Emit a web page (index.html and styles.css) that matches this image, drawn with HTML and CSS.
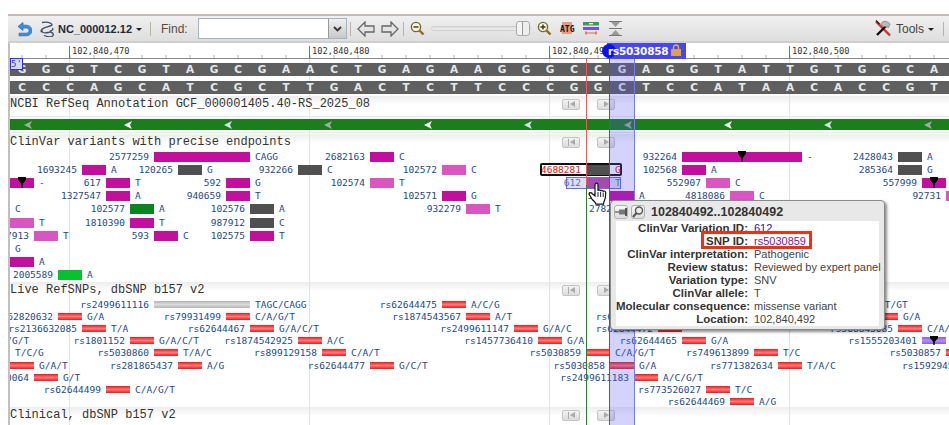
FILE: index.html
```html
<!DOCTYPE html>
<html lang="en">
<head>
  <meta charset="UTF-8" />
  <title>Sequence Viewer</title>
  <link rel="stylesheet" href="styles.css">
</head>
<body>
  <div class="viewer">
    <div class="toolbar">
      <svg class="tool tool-back" width="16" height="16" viewBox="0 0 16 16"><path d="M7 1.5 2 5.5l5 4V7h3.5a2.6 2.6 0 0 1 0 5.2H3v2.6h7.6a5.3 5.3 0 0 0 0-10.6H7z" fill="#3d8fe0" stroke="#1f66b5" stroke-width=".7"/></svg>
      <svg class="tool tool-dna" width="15" height="16" viewBox="0 0 15 16"><path d="M2 1.5c4-1 9 0 10 2s-9 2-10 5 2 4 6 3 6 1 5 3-6 1-9 0M12.5 7c1 2-1 3-3 3.500M1.500 11c-1-1 0-3 2-3.500" fill="none" stroke="#34546a" stroke-width="1.300"/></svg>
      <span class="seq-name">NC_000012.12</span>
      <span class="caret"></span>
      <span class="divider divider-seq"></span>
      <label class="find-label">Find:</label>
      <div class="find-box">
        <input class="find-input" type="text">
        <span class="find-drop"><svg width="9" height="6" viewBox="0 0 9 6"><path d="M1 1l3.500 3.500L8 1" fill="none" stroke="#333" stroke-width="1.800"/></svg></span>
      </div>
      <span class="divider divider-find"></span>
      <svg class="tool tool-prev" width="18" height="16" viewBox="0 0 18 16"><path d="M1 8l7-7v4h9v6H8v4z" fill="#e4e4e4" stroke="#666" stroke-width="1.300"/></svg>
      <svg class="tool tool-next" width="18" height="16" viewBox="0 0 18 16"><path d="M17 8l-7-7v4H1v6h9v4z" fill="#e4e4e4" stroke="#666" stroke-width="1.300"/></svg>
      <span class="divider divider-nav"></span>
      <svg class="tool tool-zoomout" width="15" height="15" viewBox="0 0 15 15"><circle cx="6" cy="6" r="4.600" fill="#fbf7d8" stroke="#6f6a30" stroke-width="1.400"/><path d="M3.500 6h5" stroke="#333" stroke-width="1.400"/><path d="M9.500 9.500l4 4" stroke="#8a6a20" stroke-width="2.400"/></svg>
      <div class="slider"><span class="slider-thumb"></span></div>
      <svg class="tool tool-zoomin" width="15" height="15" viewBox="0 0 15 15"><circle cx="6" cy="6" r="4.600" fill="#fbf7d8" stroke="#6f6a30" stroke-width="1.400"/><path d="M3.500 6h5M6 3.500v5" stroke="#333" stroke-width="1.400"/><path d="M9.500 9.500l4 4" stroke="#8a6a20" stroke-width="2.400"/></svg>
      <svg class="tool tool-atg" width="15" height="14" viewBox="0 0 15 14"><rect x="2" y="0" width="10" height="12" fill="#e89a80"/><text x="0" y="10" class="atg-text">ATG</text></svg>
      <svg class="tool tool-tracks" width="16" height="13" viewBox="0 0 16 13"><rect y="0" width="16" height="3.500" fill="#3a9a5a"/><path d="M6 1.700h4" stroke="#fff" stroke-width="1.200"/><rect y="5" width="16" height="3" fill="#7a50e8"/><path d="M2 11h12" stroke="#ee7a60" stroke-width="1.200"/><rect x="2" y="9.500" width="2" height="3" fill="#ee7a60"/><rect x="12" y="9.500" width="2" height="3" fill="#ee7a60"/></svg>
      <svg class="tool tool-collapse" width="13" height="15" viewBox="0 0 13 15"><path d="M0 .5h13M0 14.500h13M0 7.500h13" stroke="#777" stroke-width="1"/><path d="M2 1l4.500 5L11 1zM2 14l4.500-5 4.500 5z" fill="#999"/></svg>
      <span class="toolbar-spacer"></span>
      <svg class="tool tool-hammer" width="16" height="17" viewBox="0 0 16 17"><path d="M1 1.500l14 14" stroke="#d23030" stroke-width="2.400"/><path d="M1 .5l3.500 3.500" stroke="#222" stroke-width="1.400"/><path d="M2 15l9-9" stroke="#111" stroke-width="2.400"/><path d="M6 3.500C8 .5 12 .5 15 4l-1.500 3.500-6-1.500z" fill="#bbb" stroke="#666" stroke-width=".6"/></svg>
      <span class="tools-label">Tools</span>
      <span class="caret caret-tools"></span>
      <span class="divider divider-tools"></span>
    </div>

    <div class="view">
      <div class="ruler">
        <span class="ruler-mark ruler-a">102,840,470</span>
        <span class="ruler-mark ruler-b">102,840,480</span>
        <span class="ruler-mark ruler-c">102,840,490</span>
        <span class="ruler-mark ruler-d">102,840,500</span>
      </div>

      <div class="grid-line grid-a"></div>
      <div class="grid-line grid-b"></div>
      <div class="grid-line grid-c"></div>
      <div class="grid-line grid-d"></div>

      <div class="five-prime">5'</div>

      <div class="seq">
        <div class="seq-bar" data-bases="GGGTCGTAGCGAACTGAGAAGGGCCGAGGTATTGTGGCA"></div>
        <div class="seq-bar" data-bases="CCCAGCATCGCTTGACTCTTCCCGGCTCCATAACACCGT"></div>
      </div>

      <div class="track track-annot">
        <div class="track-title">NCBI RefSeq Annotation GCF_000001405.40-RS_2025_08</div>
        <span class="pager pager-prev"></span>
        <span class="pager pager-next"></span>
        <div class="gene-row"><div class="gene-bar" id="geneBar"></div></div>
      </div>

      <div class="track track-clinvar" id="clinvarTrack">
        <div class="track-title">ClinVar variants with precise endpoints</div>
        <span class="pager pager-prev"></span>
        <span class="pager pager-next"></span>
        <div class="sel-box"></div>
        <div class="hover-box"></div>
      </div>

      <div class="track track-live" id="liveTrack">
        <div class="track-title">Live RefSNPs, dbSNP b157 v2</div>
        <span class="pager pager-prev"></span>
        <span class="pager pager-next"></span>
      </div>

      <div class="track track-clinical">
        <div class="track-title">Clinical, dbSNP b157 v2</div>
        <span class="pager pager-prev"></span>
        <span class="pager pager-next"></span>
      </div>

      <div class="line-red"></div>
      <div class="line-green"></div>
      <div class="band"></div>

      <div class="flag">
        <span class="flag-cap"></span>
        <span class="flag-text">rs5030858</span>
        <svg class="flag-lock" width="10" height="12" viewBox="0 0 10 12"><path d="M2.500 5V3.500a2.500 2.500 0 0 1 5 0V5" fill="none" stroke="#e0b060" stroke-width="1.400"/><rect y="5" width="10" height="7" fill="#e0a050"/></svg>
      </div>

      <svg class="hand" width="20" height="23" viewBox="0 0 20 23"><path d="M7 14V3c0-2.500 3-2.500 3 0v6c0-1.500 2.600-1.500 2.600.3 0-1.500 2.600-1.300 2.600.5 .2-1.300 2.500-1 2.500.8 0 4 0 6-1.500 8.500-.6 1-.6 2-.7 3H8c-.5-2-2.500-3-4-5L1.500 13c-1-2 1-3 2.500-1.500z" fill="#fff" stroke="#111" stroke-width="1.200"/><path d="M10 10v5M12.600 10v5M15.200 10.500V15" stroke="#111" stroke-width=".9"/></svg>

      <div class="popup">
        <div class="popup-head">
          <span class="popup-btn"><svg width="12" height="10" viewBox="0 0 12 10"><path d="M0 5h5" stroke="#555" stroke-width="1.200"/><rect x="4" y="2.500" width="6" height="5" fill="#777"/><rect x="10" y="1" width="2" height="8" fill="#555"/></svg></span>
          <span class="popup-btn"><svg width="12" height="12" viewBox="0 0 12 12"><circle cx="7" cy="4.500" r="3.500" fill="#eee" stroke="#555" stroke-width="1.400"/><path d="M4.500 7L1 11" stroke="#555" stroke-width="2"/></svg></span>
          <span class="popup-title">102840492..102840492</span>
        </div>
        <div class="popup-body">
          <span class="popup-key">ClinVar Variation ID:</span><span class="popup-link">612</span>
          <span class="popup-key">SNP ID:</span><span class="popup-visited">rs5030859</span>
          <span class="popup-key">ClinVar interpretation:</span><span>Pathogenic</span>
          <span class="popup-key">Review status:</span><span>Reviewed by expert panel</span>
          <span class="popup-key">Variation type:</span><span>SNV</span>
          <span class="popup-key">ClinVar allele:</span><span>T</span>
          <span class="popup-key">Molecular consequence:</span><span>missense variant</span>
          <span class="popup-key">Location:</span><span>102,840,492</span>
          <div class="popup-mark"></div>
        </div>
      </div>
    </div>
  </div>
  <script src="script.js"></script>
</body>
</html>
```

FILE: styles.css
```css
html, body {
  margin: 0;
  height: 100%;
  overflow: hidden;
  background: #fff;
}

.viewer {
  margin: 14px 0 0 8px;
  border-left: 2px solid #c4bebe;
  height: 411px;
  display: flex;
  flex-direction: column;
}

/* toolbar */

.toolbar {
  display: flex;
  align-items: center;
  flex: none;
  height: 25px;
  border-top: 2px solid #c4b8b8;
  border-bottom: 2px solid #cfcfcf;
  margin-left: -2px;
  background: linear-gradient(#f0f0f0, #dedede);
  font-family: "Liberation Sans", sans-serif;
  color: #333;
}

.tool { flex: none; }
.tool-back { margin-left: 8px; }
.tool-dna { margin-left: 8px; }
.tool-prev { margin-left: 6px; }
.tool-next { margin-left: 6px; }
.tool-zoomout { margin-left: 6px; }
.tool-zoomin { margin-left: 6px; }
.tool-atg { margin-left: 8px; }
.tool-tracks { margin-left: 8px; }
.tool-collapse { margin-left: 10px; }
.tool-hammer { margin-right: 5px; }

.seq-name {
  margin-left: 3px;
  font-size: 11px;
  font-weight: bold;
  color: #1c2a3a;
}

.caret {
  width: 0;
  height: 0;
  margin: 1px 0 0 4px;
  border-left: 3px solid transparent;
  border-right: 3px solid transparent;
  border-top: 3px solid #222;
}

.divider {
  width: 1px;
  height: 14px;
  background: #b8b4a8;
  flex: none;
}

.divider-seq { margin-left: 8px; }
.divider-find { margin-left: 3px; }
.divider-nav { margin-left: 4px; }

.divider-tools { margin: 0 5px 0 9px; }
.caret-tools { margin-left: 4px; }

.find-label {
  margin-left: 10px;
  font-size: 12px;
  color: #5a4a3a;
}

.find-box {
  display: flex;
  margin-left: 10px;
  width: 149px;
  height: 21px;
  border: 1px solid #a8b0c8;
  box-sizing: border-box;
  background: #fff;
}

.find-input {
  flex: 1;
  min-width: 0;
  border: none;
  padding: 0;
  background: transparent;
}

.find-drop {
  width: 17px;
  display: flex;
  align-items: center;
  justify-content: center;
  border-left: 1px solid #999;
  background: linear-gradient(#f0f0f0, #c8c8c8);
}

.slider {
  position: relative;
  margin-left: 6px;
  width: 100px;
  height: 5px;
  border: 1px solid #cfcfcf;
  border-radius: 3px;
  background: linear-gradient(#ddd, #eee);
  box-sizing: border-box;
}

.slider-thumb {
  position: absolute;
  right: 0;
  top: -6px;
  width: 14px;
  height: 15px;
  border: 1px solid #aaa;
  border-radius: 3px;
  box-sizing: border-box;
  background: linear-gradient(to right, #f4f4f4 44%, #999 44%, #999 54%, #eee 54%);
}

.atg-text {
  font-family: "DejaVu Sans Mono", monospace;
  font-size: 8px;
  font-weight: bold;
  fill: #111;
}

.toolbar-spacer { flex: 1; }

.tools-label {
  font-size: 12px;
  color: #444;
}

/* main canvas */

.view {
  position: relative;
  flex: 1;
  overflow: hidden;
}

.ruler {
  height: 15px;
  border-bottom: 1px solid #888;
  font-family: "DejaVu Sans Mono", monospace;
  font-size: 8.7px;
  color: #333;
  background: linear-gradient(to right, #aaa 1px, transparent 1px) 11.5px 100% / 24px 3px repeat-x;
}

.ruler-mark {
  position: absolute;
  top: 3px;
  padding-left: 2px;
  line-height: 11px;
  border-left: 1px solid #777;
  height: 13px;
}

.ruler-a { left: 59px; }
.ruler-b { left: 299px; }
.ruler-c { left: 539px; }
.ruler-d { left: 779px; }

.grid-line {
  position: absolute;
  top: 16px;
  bottom: 0;
  width: 1px;
  background: #e2e2e2;
  z-index: 1;
}

.grid-a { left: 59px; }
.grid-b { left: 299px; }
.grid-c { left: 539px; }
.grid-d { left: 779px; }

.five-prime {
  position: absolute;
  left: 0;
  top: 15px;
  width: 11px;
  height: 10px;
  border: 1px solid #3030e0;
  background: #d8d8f8;
  color: #3030e0;
  font: 9px/10px "DejaVu Sans Mono", monospace;
  z-index: 3;
}

.seq {
  position: relative;
  z-index: 2;
  display: flex;
  flex-direction: column;
  gap: 5px;
  padding: 4px 0 2px;
}

.seq-bar {
  display: flex;
  height: 13px;
  background: #5f5f5f;
}

.base {
  flex: none;
  width: 24px;
  text-align: center;
  font: bold 10.5px/13px "DejaVu Sans", sans-serif;
  color: #e8e8e8;
}

/* tracks */

.track {
  position: relative;
  background: linear-gradient(#ededed, #fff 9px);
}

.track-annot { height: 38px; }
.track-clinvar { height: 149px; }
.track-live { height: 125px; }
.track-clinical { height: 40px; }

.track-title {
  font: 12px/16px "Liberation Mono", monospace;
  height: 15px;
  color: #333;
  white-space: nowrap;
  position: relative;
  z-index: 2;
}

.track-live .track-title { margin-top: -1px; }

.pager {
  position: absolute;
  top: 3px;
  width: 18px;
  height: 11px;
  box-sizing: border-box;
  border: 1px solid #c4c4c4;
  border-radius: 2px;
  background: linear-gradient(#f2f2f2, #dcdcdc);
  z-index: 2;
}

.pager-prev { left: 552px; }
.pager-next { left: 587px; }

.pager::before {
  content: "";
  position: absolute;
  top: 1px;
  border-top: 3.5px solid transparent;
  border-bottom: 3.5px solid transparent;
}

.pager::after {
  content: "";
  position: absolute;
  top: 1px;
  width: 1px;
  height: 7px;
  background: #aaa;
}

.pager-prev::before { left: 7px; border-right: 5px solid #aaa; }
.pager-prev::after { left: 5px; }
.pager-next::before { left: 6px; border-left: 5px solid #aaa; }
.pager-next::after { left: 11px; }

.gene-row {
  position: relative;
  z-index: 2;
  margin-top: 5px;
  padding: 2px 0;
  border-top: 1px solid #dfeede;
  border-bottom: 1px solid #dfeede;
}

.gene-bar {
  position: relative;
  height: 11px;
  background: #1b7d1b;
}

.gene-arrow {
  position: absolute;
  top: 2px;
}

/* features */

.feat {
  position: absolute;
  z-index: 2;
  font: 9.5px/10px "DejaVu Sans Mono", monospace;
  color: #1c4a8c;
  white-space: nowrap;
}

.feat-label {
  position: absolute;
  top: 0;
  right: 100%;
  margin-right: 5px;
}

.feat-allele {
  position: absolute;
  top: 0;
  left: 100%;
  margin-left: 5px;
}

.feat-bar {
  height: 10px;
}

.track-live .feat-bar { height: 7px; }
.track-live .feat { line-height: 7px; }

.marker {
  position: absolute;
  top: -1px;
  left: 50%;
  margin-left: -4px;
  width: 8px;
  height: 11px;
  background: #000;
  clip-path: polygon(0 0, 100% 0, 100% 25%, 62% 60%, 58% 100%, 42% 100%, 38% 60%, 0 25%);
}

.track-live .marker { height: 9px; }

.c-mag { background: #c20f9e; }
.c-light { background: #d955c2; }
.c-gray { background: #505050; }
.c-green { background: #08851f; }
.c-lime { background: #08c030; }
.c-snp { background: linear-gradient(#f01818, #ff7a7a 50%, #f01818); }
.c-snp-gray { background: linear-gradient(#b4b4b4, #dcdcdc 50%, #b4b4b4); }
.c-snp-purple { background: linear-gradient(#8a5cf0, #b090f8 50%, #8a5cf0); }
.c-hover { background: #b848a8; }

.feat-sel { color: #f01010; }

.feat-faded { color: #5a7ab0; }

.sel-box {
  position: absolute;
  left: 530px;
  top: 29px;
  width: 82px;
  height: 13px;
  box-sizing: border-box;
  border: 2px solid #111;
  border-radius: 2px;
  background: #fff;
  z-index: 1;
}

.hover-box {
  position: absolute;
  left: 556px;
  top: 43px;
  width: 55px;
  height: 12px;
  box-sizing: border-box;
  border: 1px solid #6a6af0;
  background: rgba(90, 90, 200, 0.2);
  z-index: 3;
}

/* overlays */

.line-red,
.line-green {
  position: absolute;
  left: 576px;
  width: 1px;
  z-index: 4;
}

.line-red {
  top: 16px;
  height: 126px;
  background: #ee5a5a;
}

.line-green {
  top: 142px;
  bottom: 0;
  background: #2f7d35;
}

.band {
  position: absolute;
  left: 599px;
  top: 16px;
  bottom: 0;
  width: 26px;
  box-sizing: border-box;
  border-left: 1px solid #4a4ae8;
  border-right: 1px solid #7a7af0;
  background: rgba(80, 80, 240, 0.25);
  z-index: 3;
}

.flag {
  position: absolute;
  left: 597px;
  top: 0;
  width: 79px;
  height: 16px;
  display: flex;
  align-items: center;
  background: #4747f0;
  z-index: 5;
}

.flag-cap {
  position: absolute;
  left: -5px;
  top: 1px;
  width: 14px;
  height: 14px;
  border-radius: 50%;
  background: #1010ee;
}

.flag-text {
  position: relative;
  margin-left: 1px;
  font: bold 10.5px "DejaVu Sans", sans-serif;
  letter-spacing: -0.25px;
  color: #fff;
}

.flag-lock {
  position: absolute;
  left: 64px;
  top: 1px;
}

.hand {
  position: absolute;
  left: 578px;
  top: 139px;
  z-index: 6;
}

.popup {
  position: absolute;
  left: 600px;
  top: 157px;
  width: 275px;
  height: 130px;
  box-sizing: border-box;
  border: 1px solid #8a8a8a;
  border-radius: 4px;
  background: #e8e8e8;
  box-shadow: 2px 2px 3px rgba(0, 0, 0, 0.45);
  font-family: "Liberation Sans", sans-serif;
  z-index: 7;
}

.popup-head {
  display: flex;
  align-items: center;
  gap: 3px;
  height: 14px;
  padding: 4px 0 2px 3px;
}

.popup-btn {
  display: flex;
  align-items: center;
  justify-content: center;
  width: 14px;
  height: 14px;
  box-sizing: border-box;
  border: 1px solid #b0b0b0;
  border-radius: 3px;
  background: linear-gradient(#fafafa, #dcdcdc);
}

.popup-title {
  margin-left: 3px;
  font-size: 12.5px;
  font-weight: bold;
  color: #333;
}

.popup-body {
  position: relative;
  display: grid;
  grid-template-columns: 132px 1fr;
  column-gap: 6px;
  grid-auto-rows: 13px;
  margin: 0 5px;
  padding-top: 1px;
  height: 104px;
  background: #fff;
  font-size: 11px;
  line-height: 13px;
  color: #444;
  white-space: nowrap;
}

.popup-key {
  text-align: right;
  font-size: 11.5px;
  font-weight: bold;
  color: #333;
}

.popup-link { color: #1a1aa0; }
.popup-visited { color: #7a1a8a; }

.popup-mark {
  position: absolute;
  left: 85px;
  top: 10px;
  width: 111px;
  height: 18px;
  box-sizing: border-box;
  border: 3px solid #f03010;
}
```

FILE: script.js
```js
// sequence letters
document.querySelectorAll(".seq-bar").forEach(bar => {
  bar.dataset.bases.split("").forEach(base => {
    const cell = document.createElement("span");
    cell.className = "base";
    cell.textContent = base;
    bar.appendChild(cell);
  });
});

// strand arrows on the gene
const arrowColors = ["#a8a8a8", "#fff", "#dde", "#a8a8a8", "#fff", "#dde", "#a8a8a8", "#fff", "#dde", "#a8a8a8"];
const geneBar = document.getElementById("geneBar");
arrowColors.forEach((color, i) => {
  const svg = document.createElementNS("http://www.w3.org/2000/svg", "svg");
  svg.setAttribute("class", "gene-arrow");
  svg.setAttribute("width", "8");
  svg.setAttribute("height", "8");
  svg.style.left = (14 + i * 100) + "px";
  const shape = document.createElementNS("http://www.w3.org/2000/svg", "polygon");
  shape.setAttribute("points", "0,4 8,0 6,4 8,8");
  shape.setAttribute("fill", color);
  svg.appendChild(shape);
  geneBar.appendChild(svg);
});

// [row, column, label, allele, colour, size, extra]  one column is one base, 24px
const clinvar = [
  [0, 6, "2577259", "CAGG", "mag", 4],
  [0, 15, "2682163", "C", "mag"],
  [0, 28, "932264", "-", "mag", 5, "marker"],
  [0, 37, "2428043", "A", "gray"],
  [1, 3, "1693245", "A", "mag"],
  [1, 7, "120265", "G", "gray"],
  [1, 12, "932266", "C", "gray"],
  [1, 18, "102572", "C", "light"],
  [1, 24, "4688281", "G", "gray", 1, "sel"],
  [1, 28, "102568", "A", "mag"],
  [1, 37, "285364", "G", "gray"],
  [2, 0, "", "-", "mag", 1, "marker"],
  [2, 4, "617", "T", "mag"],
  [2, 9, "592", "G", "mag"],
  [2, 15, "102574", "T", "light"],
  [2, 24, "612", "T", "hover", 1, "faded"],
  [2, 29, "552907", "C", "light"],
  [2, 38, "557999", "", "mag", 1, "marker"],
  [3, 4, "1327547", "A", "mag"],
  [3, 9, "940659", "T", "mag"],
  [3, 18, "102571", "G", "mag"],
  [3, 25, "590", "A", "mag"],
  [3, 30, "4818086", "C", "light"],
  [3, 39, "92731", "", "light"],
  [4, -1, "", "C", "mag"],
  [4, 5, "102577", "A", "green"],
  [4, 10, "102576", "A", "gray"],
  [4, 19, "932279", "T", "light"],
  [4, 26, "2782163", "", "mag"],
  [5, 0, "", "T", "light"],
  [5, 5, "1810390", "T", "mag"],
  [5, 10, "987912", "C", "gray"],
  [6, 1, "1007913", "T", "light"],
  [6, 6, "593", "C", "mag"],
  [6, 10, "102575", "T", "mag"],
  [7, -1, "", "G", "mag"],
  [8, 0, "", "A", "mag"],
  [9, 2, "2005589", "A", "lime"]
];

const live = [
  [0, 6, "rs2499611116", "TAGC/CAGG", "snp-gray", 4],
  [0, 18, "rs62644475", "A/C/G", "snp"],
  [0, 35, "", "GT/GT", "snp"],
  [1, 2, "rs62820632", "G/A", "snp"],
  [1, 9, "rs79931499", "C/A/G/T", "snp"],
  [1, 19, "rs1874543567", "A/T", "snp"],
  [1, 27, "rs62644471", "", "snp"],
  [1, 36, "", "G/A", "snp"],
  [2, 3, "rs2136632085", "T/A", "snp"],
  [2, 10, "rs62644467", "G/A/C/T", "snp"],
  [2, 21, "rs2499611147", "G/A/C", "snp"],
  [2, 27, "rs62644472", "", "snp"],
  [2, 37, "rs568843085", "C/A/G", "snp"],
  [3, -1.6, "", "A/G/T", "snp"],
  [3, 5, "rs1801152", "G/A/C/T", "snp"],
  [3, 12, "rs1874542925", "A/C", "snp"],
  [3, 22, "rs1457736410", "G/A", "snp"],
  [3, 28, "rs62644465", "G/A", "snp"],
  [3, 38, "rs1555203401", "", "snp-purple", 1, "marker"],
  [4, -1, "", "T/C/G", "snp"],
  [4, 6, "rs5030860", "T/A/C", "snp"],
  [4, 13, "rs899129158", "C/A/T", "snp"],
  [4, 24, "rs5030859", "C/A/G/T", "snp"],
  [4, 31, "rs749613899", "T/C", "snp"],
  [4, 39, "rs5030857", "", "snp"],
  [5, 0, "", "G/A/T", "snp"],
  [5, 7, "rs281865437", "A/G", "snp"],
  [5, 15, "rs62644477", "G/C/T", "snp"],
  [5, 25, "rs5030858", "G/A", "snp"],
  [5, 32, "rs771382634", "T/A/C", "snp"],
  [5, 40, "rs159294534", "", "snp"],
  [6, 1, "rs1000064", "G/T", "snp"],
  [6, 26, "rs2499611183", "A/C/G/T", "snp"],
  [7, 4, "rs62644499", "C/A/G/T", "snp"],
  [7, 29, "rs773526027", "T/C", "snp"],
  [8, 30, "rs62644469", "A/G", "snp"]
];

function addSpan(parent, className, text) {
  const span = document.createElement("span");
  span.className = className;
  span.textContent = text;
  parent.appendChild(span);
}

function drawFeatures(trackId, rows, firstRow, rowStep) {
  const track = document.getElementById(trackId);
  rows.forEach(([row, col, label, allele, color, size = 1, extra = ""]) => {
    const feat = document.createElement("div");
    feat.className = "feat";
    if (extra === "sel") feat.classList.add("feat-sel");
    if (extra === "faded") feat.classList.add("feat-faded");
    feat.style.left = col * 24 + "px";
    feat.style.top = Math.round(firstRow + row * rowStep) + "px";
    feat.style.width = size * 24 + "px";
    addSpan(feat, "feat-label", label);
    const bar = document.createElement("div");
    bar.className = "feat-bar c-" + color;
    feat.appendChild(bar);
    addSpan(feat, "feat-allele", allele);
    if (extra === "marker") addSpan(feat, "marker", "");
    track.appendChild(feat);
  });
}

drawFeatures("clinvarTrack", clinvar, 18, 13.1);
drawFeatures("liveTrack", live, 19, 12.1);
```
